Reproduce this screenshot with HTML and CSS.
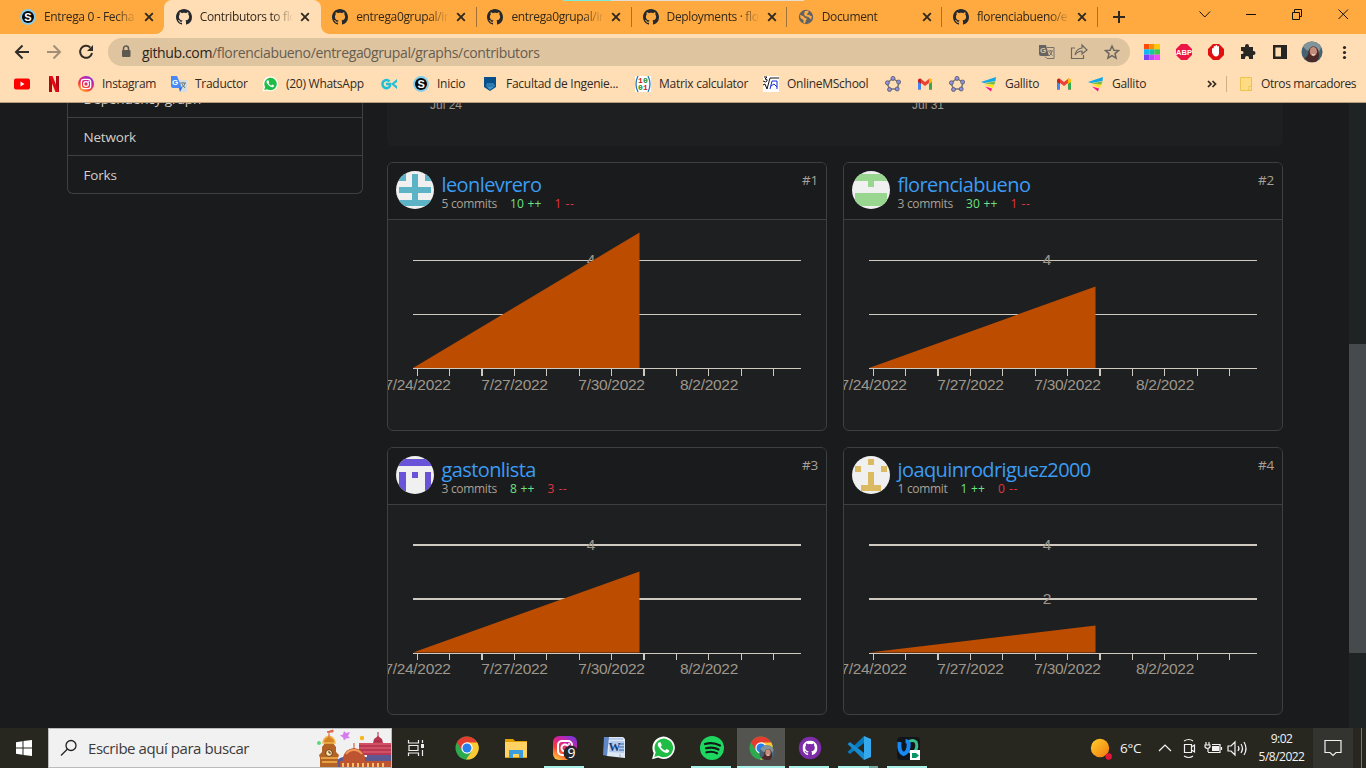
FILE: index.html
```html
<!DOCTYPE html>
<html lang="es">
<head>
<meta charset="utf-8">
<title>Contributors to florenciabueno/entrega0grupal</title>
<link rel="stylesheet" href="styles.css">
</head>
<body>
<svg class="defs" aria-hidden="true">
  <defs>
    <symbol id="github" viewBox="0 0 16 16"><path d="M8 0C3.58 0 0 3.58 0 8c0 3.54 2.29 6.53 5.47 7.59.4.07.55-.17.55-.38 0-.19-.01-.82-.01-1.49-2.01.37-2.53-.49-2.69-.94-.09-.23-.48-.94-.82-1.13-.28-.15-.68-.52-.01-.53.63-.01 1.08.58 1.23.82.72 1.21 1.87.87 2.33.66.07-.52.28-.87.51-1.07-1.78-.2-3.64-.89-3.64-3.95 0-.87.31-1.59.82-2.15-.08-.2-.36-1.02.08-2.12 0 0 .67-.21 2.2.82.64-.18 1.32-.27 2-.27s1.36.09 2 .27c1.53-1.04 2.2-.82 2.2-.82.44 1.1.16 1.92.08 2.12.51.56.82 1.27.82 2.15 0 3.07-1.87 3.75-3.65 3.95.29.25.54.73.54 1.48 0 1.07-.01 1.93-.01 2.2 0 .21.15.46.55.38A8.01 8.01 0 0 0 16 8c0-4.42-3.58-8-8-8z"/></symbol>
    <symbol id="close" viewBox="0 0 16 16"><path d="M4.200 4.200l7.600 7.600M11.800 4.200l-7.600 7.600" stroke="#30291f" stroke-width="1.900" fill="none"/></symbol>
    <symbol id="slogo" viewBox="0 0 16 16"><circle cx="8" cy="8" r="7.900" fill="#80cdf0"/><circle cx="8" cy="8" r="6" fill="#080808"/><text x="8" y="12" text-anchor="middle" font-family="Liberation Sans" font-weight="bold" font-size="11" fill="#fff">S</text></symbol>
    <symbol id="gmail" viewBox="0 0 16 16"><path d="M1 4v9.500h3V7l4 3 4-3v6.500h3V4L12.500 2.500 8 6 3.500 2.500z" fill="#ea4335"/><path d="M1 5v8.500h3V7z" fill="#4285f4"/><path d="M12 7v6.500h3V5z" fill="#34a853"/><path d="M12 3l1.500-.6L15 3.700V6l-3 2z" fill="#fbbc04"/><path d="M1 3.700 2.500 2.400 4 3v5L1 6z" fill="#c5221f"/></symbol>
    <symbol id="geogebra" viewBox="0 0 16 16"><path d="M8 2.500 14 6.500 12.200 13H4.500L2 7z" fill="none" stroke="#777" stroke-width="1.500"/><g fill="#8e91ec" stroke="#555" stroke-width=".8"><circle cx="8" cy="2.400" r="2"/><circle cx="13.600" cy="6" r="2"/><circle cx="12.200" cy="13" r="2"/><circle cx="4.500" cy="13.500" r="2"/><circle cx="2.400" cy="6.800" r="2"/></g></symbol>
    <symbol id="gallito" viewBox="0 0 16 16"><path d="M0 6 15 1l-.5 4L3 7z" fill="#11a8e8"/><path d="M3 7.300 14.500 5.500 13 9z" fill="#70bd45"/><path d="M3 8.500 13 8.500 12 12z" fill="#ffe31a"/><path d="M4 10.500 11 12.500 10 15.500z" fill="#f1148f"/></symbol>
    <symbol id="whatsapp" viewBox="0 0 24 24"><path d="M1 23.200 2.700 17A11.200 11.200 0 1 1 7.200 21.600z" fill="#fff"/><path d="M3.300 20.900 4.700 16.500A9.300 9.300 0 1 1 7.700 19.700z" fill="#1fbd46"/><path d="M8 6.200c-1.800 1.100-1.600 3.300.3 5.900 2.200 3 5.500 5.100 7.800 4.800 1.400-.3 2.200-1.300 2-2.600l-2.700-1.400-1.300 1.500c-1.900-.6-3.300-1.900-4.300-3.700l1-1.300-1-2.800z" fill="#fff"/></symbol>
    <linearGradient id="insta-fill" x1="0.200" y1="1" x2="0.800" y2="0"><stop offset="0" stop-color="#ffc33d"/><stop offset=".35" stop-color="#fa3d35"/><stop offset=".65" stop-color="#d62297"/><stop offset="1" stop-color="#7a35de"/></linearGradient>
    <symbol id="insta-lines" viewBox="0 0 24 24"><rect x="5" y="5" width="14" height="14" rx="4" fill="none" stroke="#fff" stroke-width="2"/><circle cx="12" cy="12" r="3.500" fill="none" stroke="#fff" stroke-width="2"/><circle cx="16" cy="8" r="1" fill="#fff"/></symbol>
    <symbol id="chrome" viewBox="0 0 24 24"><circle cx="12" cy="12" r="11.500" fill="#2da94f"/><path d="M12 12V6h10A11.500 11.500 0 0 1 11 23.500L17 15z" fill="#fcc934"/><path d="M2 6.200A11.500 11.500 0 0 1 22 6.500H12L7 14.800z" fill="#e43d30"/><circle cx="12" cy="12" r="5.700" fill="#fff"/><circle cx="12" cy="12" r="4.500" fill="#267fea"/></symbol>
    <symbol id="portrait" viewBox="0 0 24 24"><circle cx="12" cy="12" r="11.500" fill="#456273"/><path d="M2 6C7-2 18-1 22 7l-3 6L6 10z" fill="#81949c"/><path d="M8 12C9 4 18 4 19 11c1 5 1 8-2 11-4 2-10 1-13-3 3-2 4-4 4-7z" fill="#4a2927"/><ellipse cx="13.500" cy="11.500" rx="4" ry="5" fill="#c48d7b"/><path d="M12 14.500c1 1 2 1 3 0" stroke="#fff" fill="none"/></symbol>
    <symbol id="axis-tall" viewBox="0 0 438 210"><path class="grid-line" d="M25 148.500H413M29.500 148v8M61.500 148v8M126.500 148v8M158.500 148v8M191.500 148v8M223.500 148v8M288.500 148v8M320.500 148v8M353.500 148v8M385.500 148v8"/><path class="grid-line wide" d="M94 148v8M256 148v8"/></symbol>
    <symbol id="axis-short" viewBox="0 0 438 210"><path class="grid-line" d="M25 148.500H413M29.500 148v7M61.500 148v7M126.500 148v7M158.500 148v7M191.500 148v7M223.500 148v7M288.500 148v7M320.500 148v7M353.500 148v7M385.500 148v7"/><path class="grid-line wide" d="M94 148v7M256 148v7"/></symbol>
  </defs>
</svg>

<div class="screen">
  <header class="browser">
    <div class="tabstrip">
      <div class="tabs">
        <div class="tab"><svg class="fav"><use href="#slogo"/></svg><span class="tab-title">Entrega 0 - Fecha</span><svg class="tab-close"><use href="#close"/></svg></div>
        <div class="tab active"><svg class="fav"><use href="#github"/></svg><span class="tab-title">Contributors to flo</span><svg class="tab-close"><use href="#close"/></svg></div>
        <div class="tab divided"><svg class="fav"><use href="#github"/></svg><span class="tab-title">entrega0grupal/in</span><svg class="tab-close"><use href="#close"/></svg></div>
        <div class="tab divided"><svg class="fav"><use href="#github"/></svg><span class="tab-title">entrega0grupal/in</span><svg class="tab-close"><use href="#close"/></svg></div>
        <div class="tab divided"><svg class="fav"><use href="#github"/></svg><span class="tab-title">Deployments · flo</span><svg class="tab-close"><use href="#close"/></svg></div>
        <div class="tab divided"><svg class="fav" viewBox="0 0 16 16"><circle cx="8" cy="8" r="7.200" fill="#5f6368"/><path d="M2 6l3 1 2 2 2 .5-1 2-1 3-1.500-.5V11L2.500 9zM7 2l4-.5L10 4 8.500 5.500 11 6l3 1.500-1 3L10.500 8 7 7 6 5z" fill="#ffaa40"/></svg><span class="tab-title">Document</span><svg class="tab-close"><use href="#close"/></svg></div>
        <div class="tab divided"><svg class="fav"><use href="#github"/></svg><span class="tab-title">florenciabueno/e</span><svg class="tab-close"><use href="#close"/></svg></div>
      </div>
      <svg class="newtab" viewBox="0 0 14 14"><path d="M7 1v12M1 7h12" stroke="#2e281f" stroke-width="2"/></svg>
      <svg class="wincontrols" viewBox="0 0 176 34"><g fill="none" stroke="#15110c"><path d="M9.500 11.500 14.800 17l5.300-5.500M56 14.500h10M102.500 12.500h7v7h-7zM104.500 12v-2.500h7v7H110M148.500 9.500l9.500 9.500M158 9.500 148.500 19"/></g></svg>
      <div class="snap-hint"></div>
    </div>

    <div class="toolbar">
      <svg class="nav" viewBox="0 0 108 36"><g fill="none" stroke="#302c27" stroke-width="2"><path d="M29 18H16.500M22.500 11.500 16 18l6.500 6.500"/><path d="M47 18h12.500M53.500 11.500 60 18l-6.500 6.500" stroke="#a28e77"/><path d="M90.200 13.400A6 6 0 1 0 92 19"/></g><path d="M93 11v6h-6z" fill="#302c27"/></svg>
      <div class="omnibox">
        <svg class="lock" viewBox="0 0 10 14"><path d="M2.500 6V3.500a2.500 2.500 0 0 1 5 0V6" fill="none" stroke="#5d5951" stroke-width="1.500"/><rect x="1" y="5" width="8.500" height="7" rx="1" fill="#5d5951"/></svg>
        <span class="url"><b>github.com</b>/florenciabueno/entrega0grupal/graphs/contributors</span>
        <svg class="url-actions" viewBox="0 0 90 28"><path d="M1 7h7l3 11H3q-2 0-2-2z" fill="#666460"/><path d="M9 9.500h7v11H9l-2-2" fill="none" stroke="#77716a"/><text x="2" y="15" font-family="Liberation Sans" font-size="8" font-weight="bold" fill="#dfc4a0">G</text><path d="M10 13h5M12.500 12v1m1.500 0q0 3-3 5m.500-4q1 2 3 3.500" stroke="#77716a" fill="none"/><g fill="none" stroke="#6c675f" stroke-width="1.200"><path d="M37 10h-3.500v10.500h12V17M37 17q1-6 7-7V7l5 5-5 4v-3q-4 0-7 4z"/><path d="M74 8l1.900 4.200 4.600.4-3.500 3 1.100 4.500-4.100-2.400-4.100 2.400 1.100-4.500-3.500-3 4.600-.4z" stroke-width="1.500"/></g></svg>
      </div>
      <svg class="extensions" viewBox="0 0 236 36">
        <g><path d="M14 10h5.300v5.300H14z" fill="#ff4b08"/><path d="M19.300 10h5.300v5.300h-5.300z" fill="#ff8b00"/><path d="M24.600 10H30v5.300h-5.400z" fill="#ffca05"/><path d="M14 15.300h5.300v5.400H14z" fill="#13b6f5"/><path d="M19.300 15.300h5.300v5.400h-5.300z" fill="#16c8a2"/><path d="M24.600 15.300H30v5.400h-5.400z" fill="#3dc850"/><path d="M14 20.700h5.300V26H14z" fill="#7a42fa"/><path d="M19.300 20.700h5.300V26h-5.300z" fill="#bd49fb"/><path d="M24.600 20.700H30V26h-5.400z" fill="#f748f9"/></g>
        <path d="M51 10h6l5 5v6l-5 5h-6l-5-5v-6z" fill="#ed1545"/><text x="54" y="21" text-anchor="middle" font-family="Liberation Sans" font-weight="bold" font-size="7.500" fill="#fff">ABP</text>
        <path d="M83 10h6l5 5v6l-5 5h-6l-5-5v-6z" fill="#e01010"/><path d="M82 18v-3.500q1-1 1.700 0v-2q.9-1 1.800 0V11.500q.9-1 1.700 0v1q1-1 1.800 0v7q-.5 3-3 3t-4-4z" fill="#fff"/>
        <path d="M111 13h4v-1a2 2 0 0 1 4 0v1h4v4h.500a2 2 0 0 1 0 4H123v4h-4v-1a2 2 0 0 0-4 0v1h-4v-5h1a1.500 1.500 0 0 0 0-3h-1z" fill="#292724"/>
        <path d="M144.200 12.200h11.600v11.600h-11.600z" fill="none" stroke="#272421" stroke-width="2.400"/><path d="M151 12h5v12h-5z" fill="#272421"/>
        <svg x="171" y="7" width="22" height="22"><use href="#portrait"/></svg>
        <g fill="#292724"><circle cx="214.500" cy="13.500" r="1.600"/><circle cx="214.500" cy="18.500" r="1.600"/><circle cx="214.500" cy="23.500" r="1.600"/></g>
      </svg>
    </div>

    <nav class="bookmarks">
      <a><svg viewBox="0 0 16 16"><rect y="2.500" width="16" height="11" rx="2" fill="#f00"/><path d="M6.500 5.500v5l4-2.500z" fill="#fff"/></svg></a>
      <a><svg viewBox="0 0 16 16"><path d="M3 0h3v16H3zM10 0h3v16h-3z" fill="#b10914"/><path d="M3 0h3.500L13 16H9.500z" fill="#e50914"/></svg></a>
      <a><svg viewBox="0 0 24 24"><circle cx="12" cy="12" r="12" fill="url(#insta-fill)"/><use href="#insta-lines"/></svg><span>Instagram</span></a>
      <a><svg viewBox="0 0 16 16"><path d="M7 4h9v12h-6z" fill="#d8dde2"/><path d="M0 0h6l5 12H2q-2 0-2-2z" fill="#4789f4"/><path d="M8 12h3l-2 4z" fill="#2967d8"/><path d="M9 7h6M12 6v1m2 0q0 3-4 5m1-4 3 4" stroke="#657b80" fill="none"/><text x="1" y="9" font-family="Liberation Sans" font-weight="bold" font-size="8" fill="#fff">G</text></svg><span>Traductor</span></a>
      <a><svg viewBox="0 0 24 24"><use href="#whatsapp"/></svg><span>(20) WhatsApp</span></a>
      <a><svg viewBox="0 0 16 16"><path d="M8.500 5.500A4 4 0 1 0 9 10V8H5" fill="none" stroke="#20bfd6" stroke-width="2.500"/><path d="M16 3 10 8l6 5v-3l-3-2 3-2z" fill="#20bfd6"/></svg></a>
      <a><svg><use href="#slogo"/></svg><span>Inicio</span></a>
      <a><svg viewBox="0 0 16 16"><path d="M2 1h12v10l-6 4-6-4z" fill="#07508c"/><path d="M4 10l1-3h6l2 3-5 4z" fill="#4193c6"/><path d="M5 8h6M4 10h8" stroke="#185f99"/></svg><span>Facultad de Ingenie...</span></a>
      <a><svg viewBox="0 0 16 16"><path fill="#fff" d="M0 0h16v16H0z"/><path d="M3 0Q-1 8 3 16M13 0q4 8 0 16" fill="none" stroke="#297bb6" stroke-width="1.300"/><g font-family="Liberation Mono" font-size="8" font-weight="bold"><text x="3" y="7" fill="#d31717">1</text><text x="8" y="7" fill="#098b20">0</text><text x="3" y="14" fill="#098b20">0</text><text x="8" y="14" fill="#d31717">1</text></g></svg><span>Matrix calculator</span></a>
      <a><svg viewBox="0 0 16 16"><path fill="#fff" d="M0 0h16v16H0z"/><path d="M1 1h3L2 3q3 0 2 2t-4 0M0 9l2-1 2 5 3-11h9" fill="none" stroke="#111"/><path d="M7 13l2-8h5v8M8 10l3-2 3 3" fill="none" stroke="#1a29d6"/></svg><span>OnlineMSchool</span></a>
      <a><svg><use href="#geogebra"/></svg></a>
      <a><svg><use href="#gmail"/></svg></a>
      <a><svg><use href="#geogebra"/></svg></a>
      <a><svg><use href="#gallito"/></svg><span>Gallito</span></a>
      <a><svg><use href="#gmail"/></svg></a>
      <a><svg><use href="#gallito"/></svg><span>Gallito</span></a>
      <a><svg viewBox="0 0 16 16"><path d="M5 5l3 3-3 3M9.500 5l3 3-3 3" fill="none" stroke="#302920" stroke-width="1.700"/></svg></a>
      <a class="others"><svg viewBox="0 0 16 16"><path d="M3.500 1.500h11v13h-11z" fill="#ffdc83" stroke="#e9c44e"/><path d="M12 10.500h2.500v3.500H12z" fill="#ffe6a0" stroke="#e9c44e"/></svg><span>Otros marcadores</span></a>
    </nav>
  </header>

  <main class="page">
    <aside class="menu">
      <a>Dependency graph</a>
      <a>Network</a>
      <a>Forks</a>
    </aside>
    <section class="content">
      <div class="overview"><span>Jul 24</span><span>Jul 31</span></div>
      <div class="cards">
        <article class="card">
          <header class="person">
            <svg class="avatar" viewBox="0 0 38 38"><path fill="#f0f0f0" d="M0 0h38v38H0z"/><path fill="#5cb3c5" d="M3 0h7v10H3zM29 0h6v10h-6zM16 3h6v13h13v6H22v7h13v6H3v-6h13v-7H3v-6h13z"/></svg>
            <div class="who"><h3>leonlevrero</h3><p><span>5 commits</span><span class="add">10 ++</span><span class="del">1 --</span></p></div>
            <span class="rank">#1</span>
          </header>
          <svg class="chart" viewBox="0 0 438 210">
            <path class="grid-line" d="M25 40.500H413M25 94.500H413"/>
            <text x="203" y="45">4</text>
            <path class="area" d="M25 148 251.500 12.500V148z"/>
            <use href="#axis-tall"/>
            <text x="29.500" y="170">7/24/2022</text><text x="126.500" y="170">7/27/2022</text><text x="223.500" y="170">7/30/2022</text><text x="321" y="170">8/2/2022</text>
          </svg>
        </article>
        <article class="card">
          <header class="person">
            <svg class="avatar" viewBox="0 0 38 38"><path fill="#f0f0f0" d="M0 0h38v38H0z"/><path fill="#99d68f" d="M3 3h32v7H22v6h-6v-6H3zM3 22h32v13H3z"/></svg>
            <div class="who"><h3>florenciabueno</h3><p><span>3 commits</span><span class="add">30 ++</span><span class="del">1 --</span></p></div>
            <span class="rank">#2</span>
          </header>
          <svg class="chart" viewBox="0 0 438 210">
            <path class="grid-line" d="M25 40.500H413M25 94.500H413"/>
            <text x="203" y="45">4</text>
            <path class="area" d="M25 148 251.500 66.500V148z"/>
            <use href="#axis-tall"/>
            <text x="29.500" y="170">7/24/2022</text><text x="126.500" y="170">7/27/2022</text><text x="223.500" y="170">7/30/2022</text><text x="321" y="170">8/2/2022</text>
          </svg>
        </article>
        <article class="card">
          <header class="person">
            <svg class="avatar" viewBox="0 0 38 38"><path fill="#f0f0f0" d="M0 0h38v38H0z"/><path fill="#6853d9" d="M3 3h32v7H3zM3 16h7v19H3zM29 16h6v19h-6zM16 16h6v6h-6z"/></svg>
            <div class="who"><h3>gastonlista</h3><p><span>3 commits</span><span class="add">8 ++</span><span class="del">3 --</span></p></div>
            <span class="rank">#3</span>
          </header>
          <svg class="chart" viewBox="0 0 438 210">
            <path class="grid-line wide" d="M25 40H413M25 94H413"/>
            <text x="203" y="45">4</text>
            <path class="area" d="M25 147.500 251.500 66.500V147.500z"/>
            <use href="#axis-short"/>
            <text x="29.500" y="169">7/24/2022</text><text x="126.500" y="169">7/27/2022</text><text x="223.500" y="169">7/30/2022</text><text x="321" y="169">8/2/2022</text>
          </svg>
        </article>
        <article class="card">
          <header class="person">
            <svg class="avatar" viewBox="0 0 38 38"><path fill="#f0f0f0" d="M0 0h38v38H0z"/><path fill="#dcba61" d="M16 3h6v6h-6zM3 10h6v6H3zM29 10h6v6h-6zM16 16h6v13h7v6H9v-6h7z"/></svg>
            <div class="who"><h3>joaquinrodriguez2000</h3><p><span>1 commit</span><span class="add">1 ++</span><span class="del">0 --</span></p></div>
            <span class="rank">#4</span>
          </header>
          <svg class="chart" viewBox="0 0 438 210">
            <path class="grid-line wide" d="M25 40H413M25 94H413"/>
            <text x="203" y="45">4</text><text x="203" y="99">2</text>
            <path class="area" d="M25 147.500 251.500 120.500V147.500z"/>
            <use href="#axis-short"/>
            <text x="29.500" y="169">7/24/2022</text><text x="126.500" y="169">7/27/2022</text><text x="223.500" y="169">7/30/2022</text><text x="321" y="169">8/2/2022</text>
          </svg>
        </article>
      </div>
    </section>
    <div class="scrollbar"><div class="thumb"></div></div>
  </main>

  <footer class="taskbar">
    <svg class="start" viewBox="0 0 48 40"><path d="M16 14.200l6.500-1v6.300H16zM23.500 13 32 12v7.500h-8.500zM16 20.500h6.500v6.300l-6.500-1zM23.500 20.500H32V28l-8.500-1z" fill="#fff"/></svg>
    <div class="search">
      <svg class="lens" viewBox="0 0 18 18"><circle cx="11" cy="6.500" r="5" fill="none" stroke="#222" stroke-width="1.300"/><path d="M7.500 10 1 16.500" stroke="#222" stroke-width="1.300"/></svg>
      <span>Escribe aquí para buscar</span>
      <svg class="city" viewBox="0 0 76 38">
        <path d="M20 38v-4q3-5 8-6h24v-3h24v13z" fill="#5d5792"/>
        <path d="M44 16v10h32V14H68l-1-4-4-3-4 3-1 4H44z" fill="#b93955"/><path d="M44 15h32M44 19h32M48 23h28" stroke="#e86b77"/><path d="M63 3v6M59 12h8" stroke="#a9243f"/>
        <path d="M25 38v-6h51v6z" fill="#bd5431"/><path d="M28 34v4m5-4v4m5-4v4m5-4v4m5-4v4m5-4v4m5-4v4m5-4v4m5-4v4" stroke="#ffc06b" stroke-width="2"/>
        <path d="M28 28q2-8 11-9 9 1 11 9v4H28z" fill="#bd5431"/><path d="M31 25q3-4 8-4t8 4" fill="none" stroke="#f19a57" stroke-width="2"/><path d="M39 14v6" stroke="#bd5431"/>
        <path d="M5 38v-9l-1-3 3-3v-5l3-4h8l3 4v5l3 3-1 3v9z" fill="#b56324"/><path d="M8 14q0-5 6-7 6 2 6 7zM6 29h17M7 33h15" stroke="#f3b64e" stroke-width="1.500" fill="#d78427"/><path d="M14 3v5M12 3l6-2v2z" stroke="#da5e41" fill="#e98a62"/><circle cx="14" cy="24" r="3.400" fill="#ffe6aa" stroke="#683419"/><path d="M14 22v2h2" fill="none" stroke="#49301c"/>
        <path d="M29 2l2 2 4-1-2 4 2 2-4 .5-2 2-1-3-3-2 3-1z" fill="#d77bf0"/><circle cx="4" cy="14" r="2" fill="#5bd87c"/><circle cx="47" cy="9" r="2.200" fill="#f8b51c"/>
      </svg>
    </div>
    <svg class="taskview" viewBox="0 0 50 40"><g fill="none" stroke="#eee" stroke-width="1.200"><path d="M16.500 12v3h10v-3M17 17.500h9v5h-9zM16.500 28v-3h10v3M30.500 12v3M30.500 22v6"/></g><path d="M29 16h3v4h-3z" fill="#eee"/></svg>
    <div class="apps">
      <div><svg viewBox="0 0 24 24"><use href="#chrome"/></svg></div>
      <div><svg viewBox="0 0 24 24"><path d="M1 3h8l2 2h12v17H1z" fill="#e0a000"/><path d="M1 6h22v15H1z" fill="#ffd263"/><path d="M5 22v-8h14v8h-4v-4H9v4z" fill="#3a9edc"/></svg></div>
      <div class="open"><svg viewBox="0 0 24 24"><rect width="24" height="24" rx="6" fill="url(#insta-fill)"/><use href="#insta-lines"/><circle cx="18" cy="17" r="7.500" fill="#24272a"/><text x="18.500" y="21.500" text-anchor="middle" font-family="Open Sans" font-size="14" fill="#fff">9</text></svg></div>
      <div><svg viewBox="0 0 24 24"><path d="M4 1h17l2 2v19L5 20z" fill="#dfe8f5"/><path d="M5 3h16M18 18v3" stroke="#91addd"/><path d="M2 1h5L5 20l-4-1z" fill="#5f86c5"/><path d="M8 5h14v12l-15-1z" fill="#b4cbea"/><path d="M17 8h5M17 11h5M17 14h5" stroke="#3264ad"/><text x="12.500" y="15" text-anchor="middle" font-family="Liberation Serif" font-size="12" font-weight="bold" fill="#163f88">W</text></svg></div>
      <div><svg viewBox="0 0 24 24"><use href="#whatsapp"/></svg></div>
      <div class="open"><svg viewBox="0 0 24 24"><circle cx="12" cy="12" r="12" fill="#1ed760"/><path d="M5 8q8-2.500 15 1.500M6 12.300q7-2 12.500 1.200M6.500 16.300q6-1.500 10.500 1" fill="none" stroke="#101b16" stroke-width="2.200" stroke-linecap="round"/></svg></div>
      <div class="open current"><svg viewBox="0 0 24 24"><use href="#chrome"/></svg><svg class="mini"><use href="#portrait"/></svg></div>
      <div class="open"><svg viewBox="0 0 24 24"><circle cx="12" cy="12" r="11.200" fill="#7c2da7"/><use href="#github" x="4.500" y="4.500" width="15" height="15" fill="#fff"/></svg></div>
      <div class="open vscode"><svg viewBox="0 0 24 24"><path d="M17 7 3 18 .5 16 17 0z" fill="#067bc0"/><path d="M17 17 3 6 .5 8 17 24z" fill="#168bd0"/><path d="M17 0 24 3v18l-7 3z" fill="#36a9ee"/></svg></div>
      <div class="open"><svg viewBox="0 0 24 24"><rect x="1" y="1" width="23" height="23" rx="4" fill="#111519"/><path d="M12 6q5-3 8 0 2 5-1 9-3 3-6 0" fill="none" stroke="#39bd89" stroke-width="3"/><path d="M3.500 6q-1 10 4 12 4-1 5-7 1-6-3-6" fill="none" stroke="#1689f4" stroke-width="4"/><path d="M14 14h10v10H14z" fill="#fff"/><path d="M16 17h4l3 2.500-3 2.500h-4z" fill="#089368"/></svg></div>
    </div>
    <svg class="weather" viewBox="0 0 28 24"><defs><linearGradient id="sun" x2="1" y2="1"><stop stop-color="#ffd12a"/><stop offset="1" stop-color="#f27812"/></linearGradient></defs><circle cx="10" cy="12" r="9.200" fill="url(#sun)"/><circle cx="18.700" cy="20.500" r="3.200" fill="#e31537"/></svg>
    <span class="temp">6°C</span>
    <svg class="tray" viewBox="0 0 98 40"><g fill="none" stroke="#f2f2f2" stroke-width="1.200"><path d="M7 23l6-6 6 6M32.500 16.500h7v8h-7zM39.500 19l3-2v7l-3-2M32 13q5-3 9 0M32 28q5 3 9 0M60 16.500h8v8H56M69.500 19v3M54 14v3M57 14v3M53 17h5v2q-2.500 3-5 0zM56 20v4M76 18h3l4-4v13l-4-4h-3zM86 18q2 2.500 0 5M89 16q3 4.500 0 9M92 14q4 6.500 0 13"/></g><path d="M60 18h7v5h-7z" fill="#f2f2f2"/></svg>
    <div class="clock"><span>9:02</span><span>5/8/2022</span></div>
    <div class="notice"><svg viewBox="0 0 18 18"><path d="M1 1.500h16v12h-5l-3 3-3-3H1z" fill="none" stroke="#f1f1f1" stroke-width="1.200"/></svg></div>
    <div class="peek"></div>
  </footer>
</div>
</body>
</html>
```
FILE: styles.css
```css
* { box-sizing: border-box; }
body { margin: 0; font-family: "Open Sans", "Noto Sans", sans-serif; overflow: hidden; background: #1a1b1c; }
svg { display: block; flex: none; }
h3, p { margin: 0; font-weight: 400; }
.defs { position: absolute; width: 0; height: 0; }
.screen { width: 1366px; height: 768px; display: flex; flex-direction: column; overflow: hidden; }

/* Browser frame */
.browser { height: 103px; flex: none; background: #ffdeb5; border-bottom: 1px solid #b99d7c; }
.tabstrip { position: relative; height: 34px; display: flex; align-items: center; background: #ffaa40; }
.tabs { display: flex; height: 34px; padding-left: 8.500px; }
.tab { position: relative; flex: none; width: 155.200px; display: flex; align-items: center; padding-left: 11.500px; color: #33281a; font-size: 12px; }
.tab.active { background: #ffdeb5; border-radius: 8px 8px 0 0; width: 157px; padding-left: 12px; }
.tab.active::before, .tab.active::after { content: ""; position: absolute; bottom: 0; width: 8px; height: 8px; }
.tab.active::before { left: -8px; background: radial-gradient(circle at 0 0, #ffaa40 7.500px, #ffdeb5 8px); }
.tab.active::after { right: -8px; background: radial-gradient(circle at 100% 0, #ffaa40 7.500px, #ffdeb5 8px); }
.tab.divided::after { content: ""; position: absolute; right: -1px; top: 7px; width: 1px; height: 20px; background: #a17338; }
.fav { width: 16px; height: 16px; fill: #25292e; }
.tab-title { width: 93px; margin-left: 8px; line-height: 16px; overflow: hidden; white-space: nowrap; letter-spacing: -.35px; -webkit-mask-image: linear-gradient(90deg, #000 72px, transparent 93px); mask-image: linear-gradient(90deg, #000 72px, transparent 93px); }
.tab-close { width: 16px; height: 16px; margin-left: 4px; }
.newtab { width: 14px; height: 14px; margin-left: 15px; }
.wincontrols { width: 176px; height: 34px; margin-left: auto; }
.snap-hint { position: absolute; top: 0; left: 563px; width: 241px; height: 1px; background: linear-gradient(90deg, #7aedda 48px, #e6ddd2 48px); }

.toolbar { height: 36px; display: grid; grid-template-columns: 108px 1022px 236px; align-items: center; }
.nav { width: 108px; height: 36px; }
.omnibox { height: 28px; display: flex; align-items: center; border-radius: 14px; background: #dfc4a0; padding-left: 13px; padding-right: 2px; }
.lock { width: 10px; height: 14px; }
.url { margin-left: 11px; font-size: 14px; color: #665d50; letter-spacing: -.36px; }
.url b { font-weight: 400; color: #29241d; }
.url-actions { width: 90px; height: 28px; margin-left: auto; }
.extensions { width: 236px; height: 36px; }

.bookmarks { display: grid; grid-template-columns: 32px 32px 93px 91px 119px 32px 69px 153px 128px 122px 32px 32px 32px 75px 32px 115px 23px 130px; height: 28px; padding-left: 14px; align-items: center; color: #33291f; font-size: 12px; letter-spacing: -.27px; }
.bookmarks a { display: flex; align-items: center; gap: 8px; white-space: nowrap; line-height: 16px; }
.bookmarks svg { width: 16px; height: 16px; }
.bookmarks .others { border-left: 1px solid #cfae82; padding-left: 10px; height: 16px; letter-spacing: -.4px; }

/* Page */
.page { height: 625px; flex: none; display: grid; grid-template-columns: 320px 962px 17px; padding-left: 67px; background: #1a1b1c; overflow: hidden; }
.menu { width: 296px; height: 91px; border: 1px solid #3d4144; border-top: 0; border-radius: 0 0 6px 6px; overflow: hidden; display: flex; flex-direction: column; justify-content: flex-end; font-size: 13.500px; letter-spacing: -.2px; color: #d4d0c9; }
.menu a { flex: none; height: 38px; line-height: 38px; padding-left: 15.500px; }
.menu a + a { border-top: 1px solid #3d4144; }
.menu a:first-child { line-height: 40px; letter-spacing: -.1px; }
.content { width: 896px; height: 612px; }
.overview { height: 43px; border-radius: 0 0 6px 6px; background: #1e1f21; display: flex; overflow: hidden; font: 12px/14px "Liberation Sans", sans-serif; color: #9f978b; }
.overview span { width: 482px; flex: none; padding-left: 43px; margin-top: -5px; }
.cards { display: grid; grid-template-columns: 440px 440px; grid-template-rows: 269px 268px; gap: 16px; margin-top: 16px; }
.card { border: 1px solid #3c4042; border-radius: 6px; overflow: hidden; background: #1e1f21; }
.person { height: 57px; padding: 8px; display: flex; border-bottom: 1px solid #3c4042; background: #1a1b1c; }
.avatar { width: 38px; height: 38px; border-radius: 50%; }
.who { margin-left: 7.500px; }
.who h3 { height: 25px; line-height: 27px; font-size: 20px; letter-spacing: -.6px; color: #3b9cf4; white-space: nowrap; }
.who p { display: flex; gap: 13px; height: 16px; line-height: 16px; font-size: 12px; letter-spacing: -.3px; color: #a9a197; white-space: nowrap; }
.who .add { color: #6de085; letter-spacing: .2px; }
.who .del { color: #e03540; letter-spacing: .5px; }
.rank { margin-left: auto; font-size: 13.500px; letter-spacing: -.2px; line-height: 18px; color: #a9a197; }
.chart { width: 438px; height: 210px; }
.chart text { font: 15.500px "Liberation Sans", Arial, sans-serif; letter-spacing: -.3px; fill: #9f978b; text-anchor: middle; }
.grid-line { stroke: #cfc9bf; stroke-width: 1; fill: none; }
.grid-line.wide { stroke-width: 2; }
.area { fill: #bc4c00; }
.scrollbar { background: #1f2324; padding-top: 241px; height: 625px; }
.thumb { height: 309px; background: #464a4c; }

/* Taskbar */
.taskbar { height: 40px; flex: none; display: grid; grid-template-columns: 48px 344px 50px 648px 30px 32px 98px 63px 40px 13px; background: #272720; color: #f4f4f4; align-items: center; }
.start { width: 48px; height: 40px; }
.search { height: 40px; display: flex; align-items: center; padding-left: 11px; background: #f1f1f1; border: 1px solid #bbb; color: #3b3b3b; font-size: 15px; letter-spacing: -.44px; }
.search span { margin-left: 10px; white-space: nowrap; }
.lens { width: 18px; height: 18px; }
.city { width: 76px; height: 38px; margin-left: auto; }
.taskview { width: 50px; height: 40px; }
.apps { display: flex; height: 40px; }
.apps div { position: relative; width: 49px; height: 40px; display: flex; align-items: center; justify-content: center; }
.apps svg { width: 24px; height: 24px; }
.apps .open::after { content: ""; position: absolute; bottom: 0; left: 4px; width: 40px; height: 2px; background: #a9f1e8; }
.apps .current { background: linear-gradient(#53534f, #53534f) 1px 0 / 48px 40px no-repeat; }
.apps .current::after { left: 1px; width: 48px; }
.apps .vscode::after { background: linear-gradient(90deg, #a9f1e8 31px, #73aaa4 31px); }
.apps .mini { position: absolute; left: 23px; top: 17px; width: 16px; height: 16px; }
.weather { width: 28px; height: 24px; }
.temp { font-size: 13.500px; white-space: nowrap; letter-spacing: -.3px; }
.tray { width: 98px; height: 40px; }
.clock { display: flex; flex-direction: column; align-items: center; font-size: 12px; line-height: 18px; white-space: nowrap; letter-spacing: -.5px; }
.notice { height: 40px; background: #33332f; display: flex; align-items: center; justify-content: center; }
.notice svg { width: 18px; height: 18px; }
.peek { width: 9px; height: 40px; border-right: 1px solid #77776f; }
```
